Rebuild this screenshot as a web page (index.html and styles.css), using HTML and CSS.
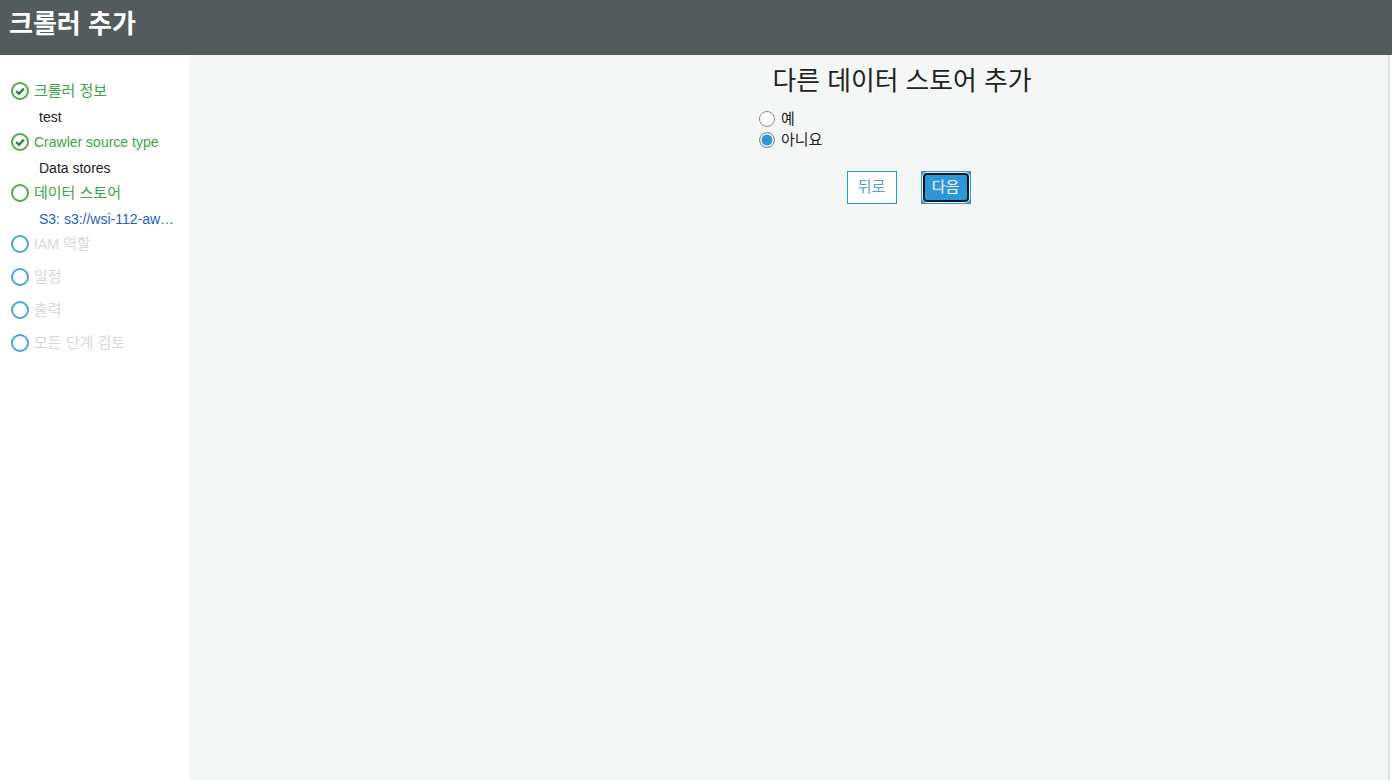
FILE: index.html
```html
<!DOCTYPE html>
<html lang="ko">
<head>
<meta charset="utf-8">
<title>크롤러 추가</title>
<link rel="stylesheet" href="styles.css">
</head>
<body>
<header class="topbar"><h1 class="topbar-title">크롤러 추가</h1></header>
<div class="layout">
  <nav class="steps">
    <div class="step step-done">
      <svg class="step-icon" viewBox="0 0 18 18"><circle cx="9" cy="9" r="8" class="ring-green"/><path d="M5.2 9.2 8 11.9 12.9 6.6" class="check"/></svg>
      <span class="step-label step-label-ko">크롤러 정보</span>
    </div>
    <div class="step-value">test</div>
    <div class="step step-done">
      <svg class="step-icon" viewBox="0 0 18 18"><circle cx="9" cy="9" r="8" class="ring-green"/><path d="M5.2 9.2 8 11.9 12.9 6.6" class="check"/></svg>
      <span class="step-label">Crawler source type</span>
    </div>
    <div class="step-value">Data stores</div>
    <div class="step step-done">
      <svg class="step-icon" viewBox="0 0 18 18"><circle cx="9" cy="9" r="8" class="ring-green"/></svg>
      <span class="step-label step-label-ko">데이터 스토어</span>
    </div>
    <div class="step-value step-link">S3: s3://wsi-112-aw…</div>
    <div class="step step-todo">
      <svg class="step-icon" viewBox="0 0 18 18"><circle cx="9" cy="9" r="8" class="ring-blue"/></svg>
      <span class="step-label step-label-ko"><span class="latin">IAM</span> 역할</span>
    </div>
    <div class="step step-todo">
      <svg class="step-icon" viewBox="0 0 18 18"><circle cx="9" cy="9" r="8" class="ring-blue"/></svg>
      <span class="step-label step-label-ko">일정</span>
    </div>
    <div class="step step-todo">
      <svg class="step-icon" viewBox="0 0 18 18"><circle cx="9" cy="9" r="8" class="ring-blue"/></svg>
      <span class="step-label step-label-ko">출력</span>
    </div>
    <div class="step step-todo">
      <svg class="step-icon" viewBox="0 0 18 18"><circle cx="9" cy="9" r="8" class="ring-blue"/></svg>
      <span class="step-label step-label-ko">모든 단계 검토</span>
    </div>
  </nav>
  <main class="content">
    <section class="form">
      <h2 class="form-title">다른 데이터 스토어 추가</h2>
      <div class="options">
        <label class="option"><span class="radio"></span>예</label>
        <label class="option"><span class="radio radio-on"></span>아니요</label>
      </div>
      <div class="actions">
        <button class="btn btn-back" type="button">뒤로</button>
        <button class="btn btn-next" type="button"><span class="btn-next-inner">다음</span></button>
      </div>
    </section>
  </main>
  <div class="edge"></div>
</div>
</body>
</html>
```
FILE: styles.css
```css
* { box-sizing: border-box; }
html, body { margin: 0; height: 100%; overflow: hidden; }
body {
  display: flex;
  flex-direction: column;
  font-family: "Liberation Sans", "Noto Sans CJK KR", sans-serif;
  font-size: 14px;
  color: #222;
  background: #fff;
}
.topbar {
  height: 55px;
  flex: none;
  background: #545b5d;
  padding: 7px 0 0 9px;
}
.topbar-title {
  margin: 0;
  font-size: 26px;
  line-height: 34px;
  font-weight: 700;
  color: #fff;
}
.layout { flex: 1; display: flex; min-height: 0; }
.steps {
  width: 189px;
  flex: none;
  background: #fff;
  padding-top: 19px;
}
.step {
  display: flex;
  align-items: center;
  height: 33px;
  padding-left: 11px;
  gap: 5px;
  line-height: 18px;
}
.step-icon { width: 18px; height: 18px; flex: none; }
.ring-green, .ring-blue { fill: none; stroke-width: 2; }
.ring-green { stroke: #4eae45; }
.ring-blue { stroke: #45a6e0; }
.check { fill: none; stroke: #3a7d44; stroke-width: 2.4; }
.step-label-ko { font-size: 15px; }
.latin { font-size: 14px; }
.step-done .step-label { color: #3aa548; }
.step-todo .step-label { color: #d5d9da; }
.step-value {
  height: 18px;
  padding-left: 39px;
  line-height: 20px;
  color: #222;
  white-space: nowrap;
}
.step-link { color: #1a5fc4; }
.content { flex: 1; background: #f5f7f7; padding: 10px 0 0 570px; }
.form { width: 286px; }
.form-title {
  margin: 0;
  height: 32px;
  text-align: center;
  font-size: 25.8px;
  line-height: 32px;
  font-weight: 400;
  color: #222;
}
.options { margin-top: 11px; display: flex; flex-direction: column; gap: 0; }
.option {
  display: flex;
  align-items: center;
  gap: 6px;
  height: 21px;
  font-size: 15px;
  line-height: 20px;
  color: #222;
}
.radio {
  width: 16px;
  height: 16px;
  border: 1px solid #8f8f8f;
  border-radius: 50%;
  background: #fff;
  flex: none;
}
.radio-on { background: #2e97d8; box-shadow: inset 0 0 0 1.5px #fff; }
.actions {
  display: flex;
  justify-content: center;
  gap: 24px;
  margin-top: 21px;
  padding-left: 13px;
}
.btn {
  width: 50px;
  height: 33px;
  padding: 0 0 5px;
  font-family: inherit;
  font-size: 15px;
  border: 1px solid #2e97d8;
  border-radius: 0;
}
.btn-back { background: #fff; color: #5a9fd0; }
.btn-next { background: #2e97d8; color: #fff; padding: 1px; }
.btn-next-inner {
  display: flex;
  align-items: center;
  justify-content: center;
  height: 100%;
  padding-bottom: 4px;
  border: 2px solid #16191a;
  border-radius: 4px;
  box-shadow: 0 0 0 1px #e8f3fa;
  background: #2e97d8;
}
.edge {
  width: 4px;
  flex: none;
  background: #fff;
  border-left: 2px solid #dfe2e2;
}
```
